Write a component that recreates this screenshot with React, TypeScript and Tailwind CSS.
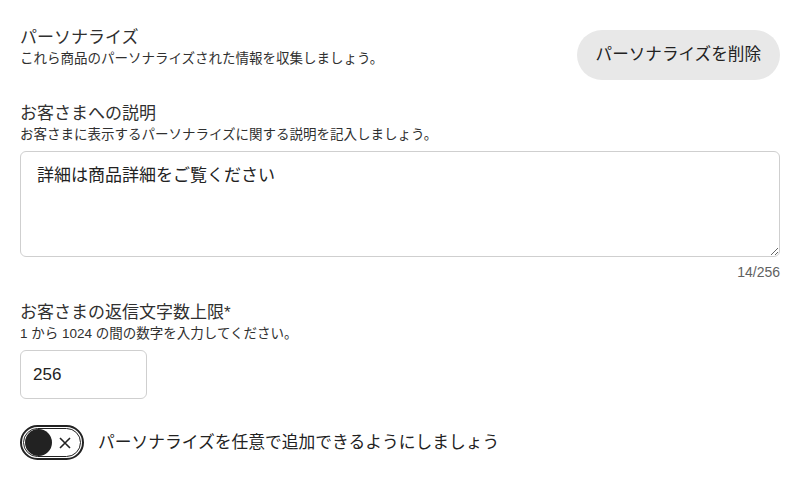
import { useState } from 'react'

const font = { fontFamily: '"Liberation Sans", "Noto Sans CJK JP", sans-serif' }

function FieldHeading({ title, hint }: { title: string; hint: string }) {
  return (
    <div>
      <h2 className="text-[17px] leading-[24px] text-[#303030]">{title}</h2>
      <p className="text-[13.5px] leading-[17px] text-[#303030]">{hint}</p>
    </div>
  )
}

export default function App() {
  const [desc, setDesc] = useState('詳細は商品詳細をご覧ください')
  const [limit, setLimit] = useState('256')
  const [optional, setOptional] = useState(false)

  return (
    <div className="w-[800px] h-[481px] bg-white px-5 pt-[26px]" style={font}>
      <div className="flex items-start justify-between">
        <FieldHeading title="パーソナライズ" hint="これら商品のパーソナライズされた情報を収集しましょう。" />
        <button className="mt-1 h-[50px] px-[19px] rounded-full bg-[#e8e8e8] text-[16.6px] text-[#222]">
          パーソナライズを削除
        </button>
      </div>

      <div className="mt-[22px]">
        <FieldHeading title="お客さまへの説明" hint="お客さまに表示するパーソナライズに関する説明を記入しましょう。" />
        <textarea
          value={desc}
          onChange={(e) => setDesc(e.target.value)}
          className="mt-[8px] block w-full h-[106px] rounded-md border border-[#cfcfcf] px-4 pt-[11px] text-[17px] text-[#222] outline-none"
          style={font}
        />
        <div className="mt-[5px] text-right text-[14px] text-[#616161]">{desc.length}/256</div>
      </div>

      <div className="mt-[18px]">
        <FieldHeading title="お客さまの返信文字数上限*" hint="1 から 1024 の間の数字を入力してください。" />
        <input
          value={limit}
          onChange={(e) => setLimit(e.target.value)}
          className="mt-[8px] block w-[127px] h-[49px] rounded-md border border-[#cfcfcf] px-3 text-[17px] text-[#222] outline-none"
          style={font}
        />
      </div>

      <div className="mt-[26px] flex items-center gap-[14px]">
        <button
          onClick={() => setOptional(!optional)}
          className="flex items-center w-[64px] h-[35px] rounded-full border-2 border-[#222] p-[1px]"
        >
          <span className="flex items-center w-full h-full rounded-full border border-[#222] pl-[1px]">
            <span className="w-[27px] h-[27px] rounded-full bg-[#222]" />
            <svg width="14" height="14" viewBox="0 0 14 14" className="ml-[6px]">
              <path d="M2 2 L12 12 M12 2 L2 12" stroke="#222" strokeWidth="1.6" />
            </svg>
          </span>
        </button>
        <span className="text-[16.75px] text-[#222]">パーソナライズを任意で追加できるようにしましょう</span>
      </div>
    </div>
  )
}
